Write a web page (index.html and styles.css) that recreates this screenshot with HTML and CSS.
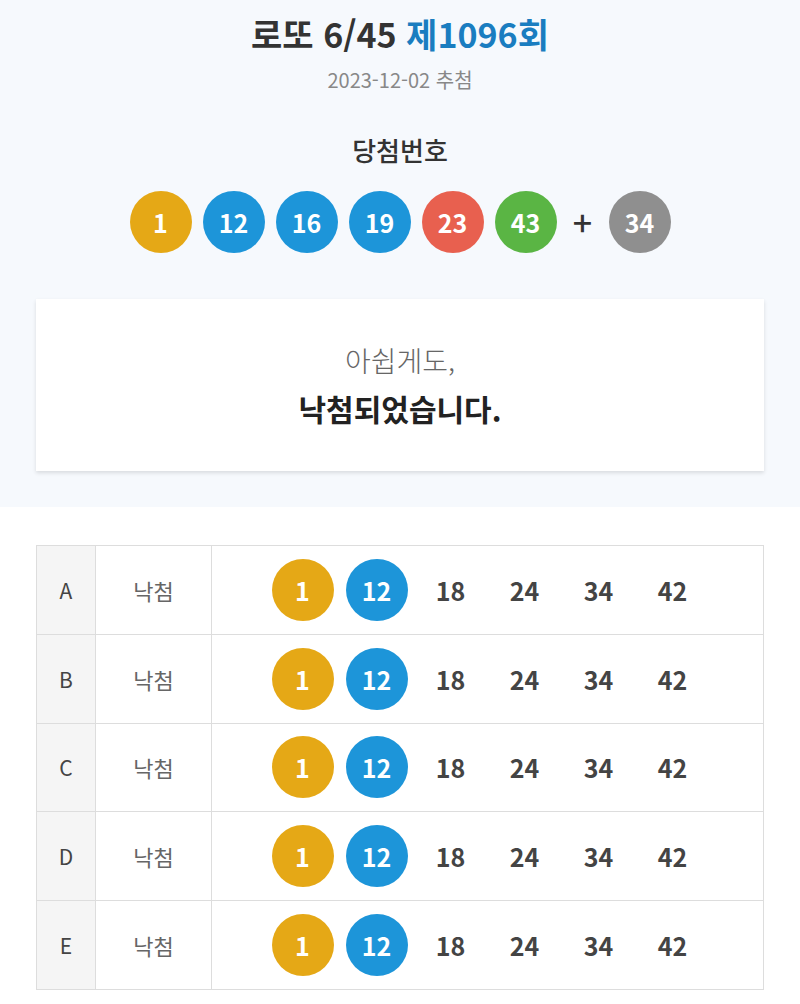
FILE: index.html
```html
<!DOCTYPE html>
<html lang="ko">
<head>
  <meta charset="UTF-8">
  <meta name="viewport" content="width=device-width, initial-scale=1">
  <title>로또 6/45 제1096회</title>
  <link rel="stylesheet" href="styles.css">
</head>

<body>

<!-- Draw result -->
<div class="top">
  <h1>로또 6/45 <span class="round">제1096회</span></h1>
  <p class="date">2023-12-02 추첨</p>

  <h2>당첨번호</h2>
  <div class="balls">
    <span class="ball yellow">1</span>
    <span class="ball blue">12</span>
    <span class="ball blue">16</span>
    <span class="ball blue">19</span>
    <span class="ball red">23</span>
    <span class="ball green">43</span>
    <span class="plus">+</span>
    <span class="ball gray">34</span>
  </div>

  <div class="card">
    <p class="sorry">아쉽게도,</p>
    <p class="result">낙첨되었습니다.</p>
  </div>
</div>

<!-- My tickets -->
<table class="tickets">
  <tr>
    <td class="label">A</td>
    <td class="state">낙첨</td>
    <td><div class="nums"><span class="ball yellow">1</span><span class="ball blue">12</span><span class="num">18</span><span class="num">24</span><span class="num">34</span><span class="num">42</span></div></td>
  </tr>
  <tr>
    <td class="label">B</td>
    <td class="state">낙첨</td>
    <td><div class="nums"><span class="ball yellow">1</span><span class="ball blue">12</span><span class="num">18</span><span class="num">24</span><span class="num">34</span><span class="num">42</span></div></td>
  </tr>
  <tr>
    <td class="label">C</td>
    <td class="state">낙첨</td>
    <td><div class="nums"><span class="ball yellow">1</span><span class="ball blue">12</span><span class="num">18</span><span class="num">24</span><span class="num">34</span><span class="num">42</span></div></td>
  </tr>
  <tr>
    <td class="label">D</td>
    <td class="state">낙첨</td>
    <td><div class="nums"><span class="ball yellow">1</span><span class="ball blue">12</span><span class="num">18</span><span class="num">24</span><span class="num">34</span><span class="num">42</span></div></td>
  </tr>
  <tr>
    <td class="label">E</td>
    <td class="state">낙첨</td>
    <td><div class="nums"><span class="ball yellow">1</span><span class="ball blue">12</span><span class="num">18</span><span class="num">24</span><span class="num">34</span><span class="num">42</span></div></td>
  </tr>
</table>

</body>
</html>
```

FILE: styles.css
```css
* {
  box-sizing: border-box;
  padding: 0;
  margin: 0;
}

body {
  font-family: "Noto Sans CJK KR", "Noto Sans", sans-serif;
  background: #fff;
  color: #333;
}

/* Draw result */
.top {
  background: #f6f9fd;
  padding: 11px 36px 36px;
  text-align: center;
}

h1 {
  font-size: 34px;
  line-height: 46px;
  font-weight: 700;
  color: #333;
}

.round {
  color: #1a7dc0;
}

.date {
  margin-top: 9px;
  font-size: 20px;
  line-height: 28px;
  color: #888;
}

h2 {
  margin-top: 38px;
  font-size: 26px;
  line-height: 36px;
  font-weight: 500;
  color: #333;
}

.balls {
  margin-top: 23px;
  display: flex;
  justify-content: center;
  align-items: center;
  gap: 11px;
}

.ball {
  width: 62px;
  height: 62px;
  border-radius: 50%;
  display: flex;
  align-items: center;
  justify-content: center;
  color: #fff;
  font-size: 25px;
  font-weight: 700;
  flex-shrink: 0;
}

.yellow { background: #e5a816; }
.blue { background: #1d95d9; }
.red { background: #e8604f; }
.green { background: #5ab544; }
.gray { background: #8f8f8f; }

.plus {
  width: 30px;
  font-size: 34px;
  font-weight: 500;
  color: #333;
  line-height: 1;
}

.card {
  margin-top: 46px;
  background: #fff;
  padding: 40px 20px 40px;
  box-shadow: 0 2px 4px rgba(0,0,0,0.12);
}

.sorry {
  font-size: 28px;
  line-height: 42px;
  font-weight: 300;
  color: #666;
}

.result {
  margin-top: 4px;
  font-size: 30px;
  line-height: 46px;
  font-weight: 700;
  color: #222;
}

/* My tickets */
.tickets {
  margin: 38px 36px 0;
  width: 728px;
  border-collapse: collapse;
  border: 1px solid #ddd;
}

.tickets td {
  border: 1px solid #ddd;
  height: 88.8px;
  text-align: center;
  vertical-align: middle;
}

.tickets .label {
  width: 59px;
  background: #f5f5f5;
  font-size: 21px;
  color: #444;
}

.tickets .state {
  width: 116px;
  font-size: 22px;
  color: #666;
}

.nums {
  display: flex;
  justify-content: center;
  align-items: center;
  gap: 12px;
}

.num {
  width: 62px;
  font-size: 25px;
  font-weight: 700;
  color: #444;
}
```
